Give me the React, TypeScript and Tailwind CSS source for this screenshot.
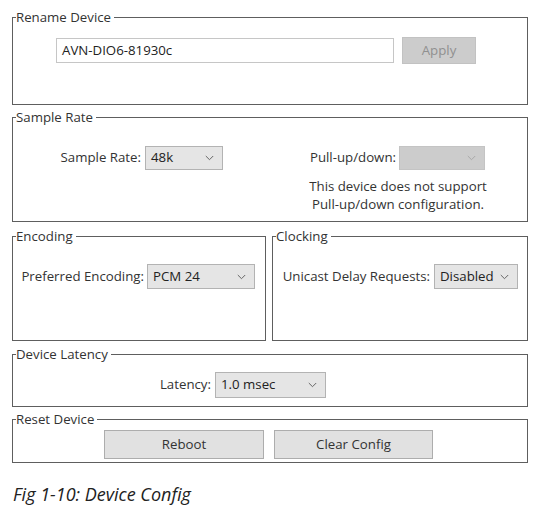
import React from "react";

function Chevron({ className = "" }: { className?: string }) {
  return (
    <svg className={className} width="9" height="6" viewBox="0 0 9 6" fill="none">
      <path d="M0.8 1l3.7 3.7L8.2 1" stroke="currentColor" strokeWidth="1" />
    </svg>
  );
}

function Group({ title, className = "", children }: { title: string; className?: string; children?: React.ReactNode }) {
  return (
    <fieldset className={`border border-[#5e5e5e] ${className}`}>
      <legend className="ml-[3px] pr-[3px] text-[13.25px] leading-4 text-[#333]">{title}</legend>
      {children}
    </fieldset>
  );
}

function Select({ value, width, height = "h-[25px]", disabled = false }: { value: string; width: string; height?: string; disabled?: boolean }) {
  return (
    <div
      className={`${width} ${height} flex items-center justify-between pl-[5px] pr-[8px] border ${
        disabled ? "bg-[#cccccc] border-[#c4c4c4] text-[#a0a0a0]" : "bg-[#e5e5e5] border-[#b3b3b3] text-[#222]"
      }`}
    >
      <span className="text-[13.25px] whitespace-nowrap">{value}</span>
      <Chevron className={disabled ? "text-[#a8a8a8]" : "text-[#666]"} />
    </div>
  );
}

export default function App() {
  return (
    <div className="w-[541px] h-[520px] bg-white pt-[9px] pl-[12px] font-['Open_Sans',sans-serif] text-[#333]">
      <div className="w-[516px] flex flex-col">
        {/* Rename Device */}
        <Group title="Rename Device" className="h-[96px]">
          <div className="mt-[12px] ml-[43px] flex items-center gap-[8px]">
            <div className="w-[338px] h-[25px] border border-[#c6c6c6] bg-white flex items-center pl-[5px] text-[13.25px] text-[#222]">
              AVN-DIO6-81930c
            </div>
            <button className="w-[74px] h-[27px] bg-[#cccccc] border border-[#c2c2c2] text-[13.25px] text-[#909090]">
              Apply
            </button>
          </div>
        </Group>

        {/* Sample Rate */}
        <Group title="Sample Rate" className="mt-[4px] h-[113px]">
          <div className="mt-[21px] flex items-start">
            <div className="flex items-center">
              <span className="w-[128px] text-right text-[13.25px]">Sample Rate:</span>
              <div className="ml-[4px]">
                <Select value="48k" width="w-[78px]" height="h-[24px]" />
              </div>
            </div>
            <div className="ml-[86px] flex flex-col items-center w-[178px]">
              <div className="flex items-center w-full">
                <span className="w-[87px] text-right text-[13.25px] whitespace-nowrap">Pull-up/down:</span>
                <div className="ml-[3px]">
                  <Select value="" width="w-[86px]" height="h-[24px]" disabled />
                </div>
              </div>
              <p className="mt-[7px] text-[13.25px] leading-[18px] text-center text-[#333] whitespace-nowrap">
                This device does not support
                <br />
                Pull-up/down configuration.
              </p>
            </div>
          </div>
        </Group>

        {/* Encoding / Clocking */}
        <div className="mt-[6px] flex gap-[6px]">
          <Group title="Encoding" className="w-[254px] h-[113px]">
            <div className="mt-[20px] flex items-center">
              <span className="w-[131px] text-right text-[13.25px] whitespace-nowrap">Preferred Encoding:</span>
              <div className="ml-[3px]">
                <Select value="PCM 24" width="w-[108px]" />
              </div>
            </div>
          </Group>
          <Group title="Clocking" className="w-[256px] h-[113px]">
            <div className="mt-[20px] flex items-center">
              <span className="w-[157px] text-right text-[13.25px] whitespace-nowrap">Unicast Delay Requests:</span>
              <div className="ml-[4px]">
                <Select value="Disabled" width="w-[84px]" />
              </div>
            </div>
          </Group>
        </div>

        {/* Device Latency */}
        <Group title="Device Latency" className="mt-[5px] h-[61px]">
          <div className="mt-[10px] flex items-center">
            <span className="w-[198px] text-right text-[13.25px]">Latency:</span>
            <div className="ml-[4px]">
              <Select value="1.0 msec" width="w-[111px]" height="h-[26px]" />
            </div>
          </div>
        </Group>

        {/* Reset Device */}
        <Group title="Reset Device" className="mt-[4px] h-[52px]">
          <div className="mt-[3px] ml-[91px] flex gap-[10px]">
            <button className="w-[160px] h-[29px] bg-[#e1e1e1] border border-[#adadad] text-[13.25px] text-[#333]">
              Reboot
            </button>
            <button className="w-[159px] h-[29px] bg-[#e1e1e1] border border-[#adadad] text-[13.25px] text-[#333]">
              Clear Config
            </button>
          </div>
        </Group>
      </div>

      <p className="mt-[19px] ml-[1px] text-[18px] leading-6 italic text-[#222]">
        Fig 1-10: Device Config
      </p>
    </div>
  );
}
